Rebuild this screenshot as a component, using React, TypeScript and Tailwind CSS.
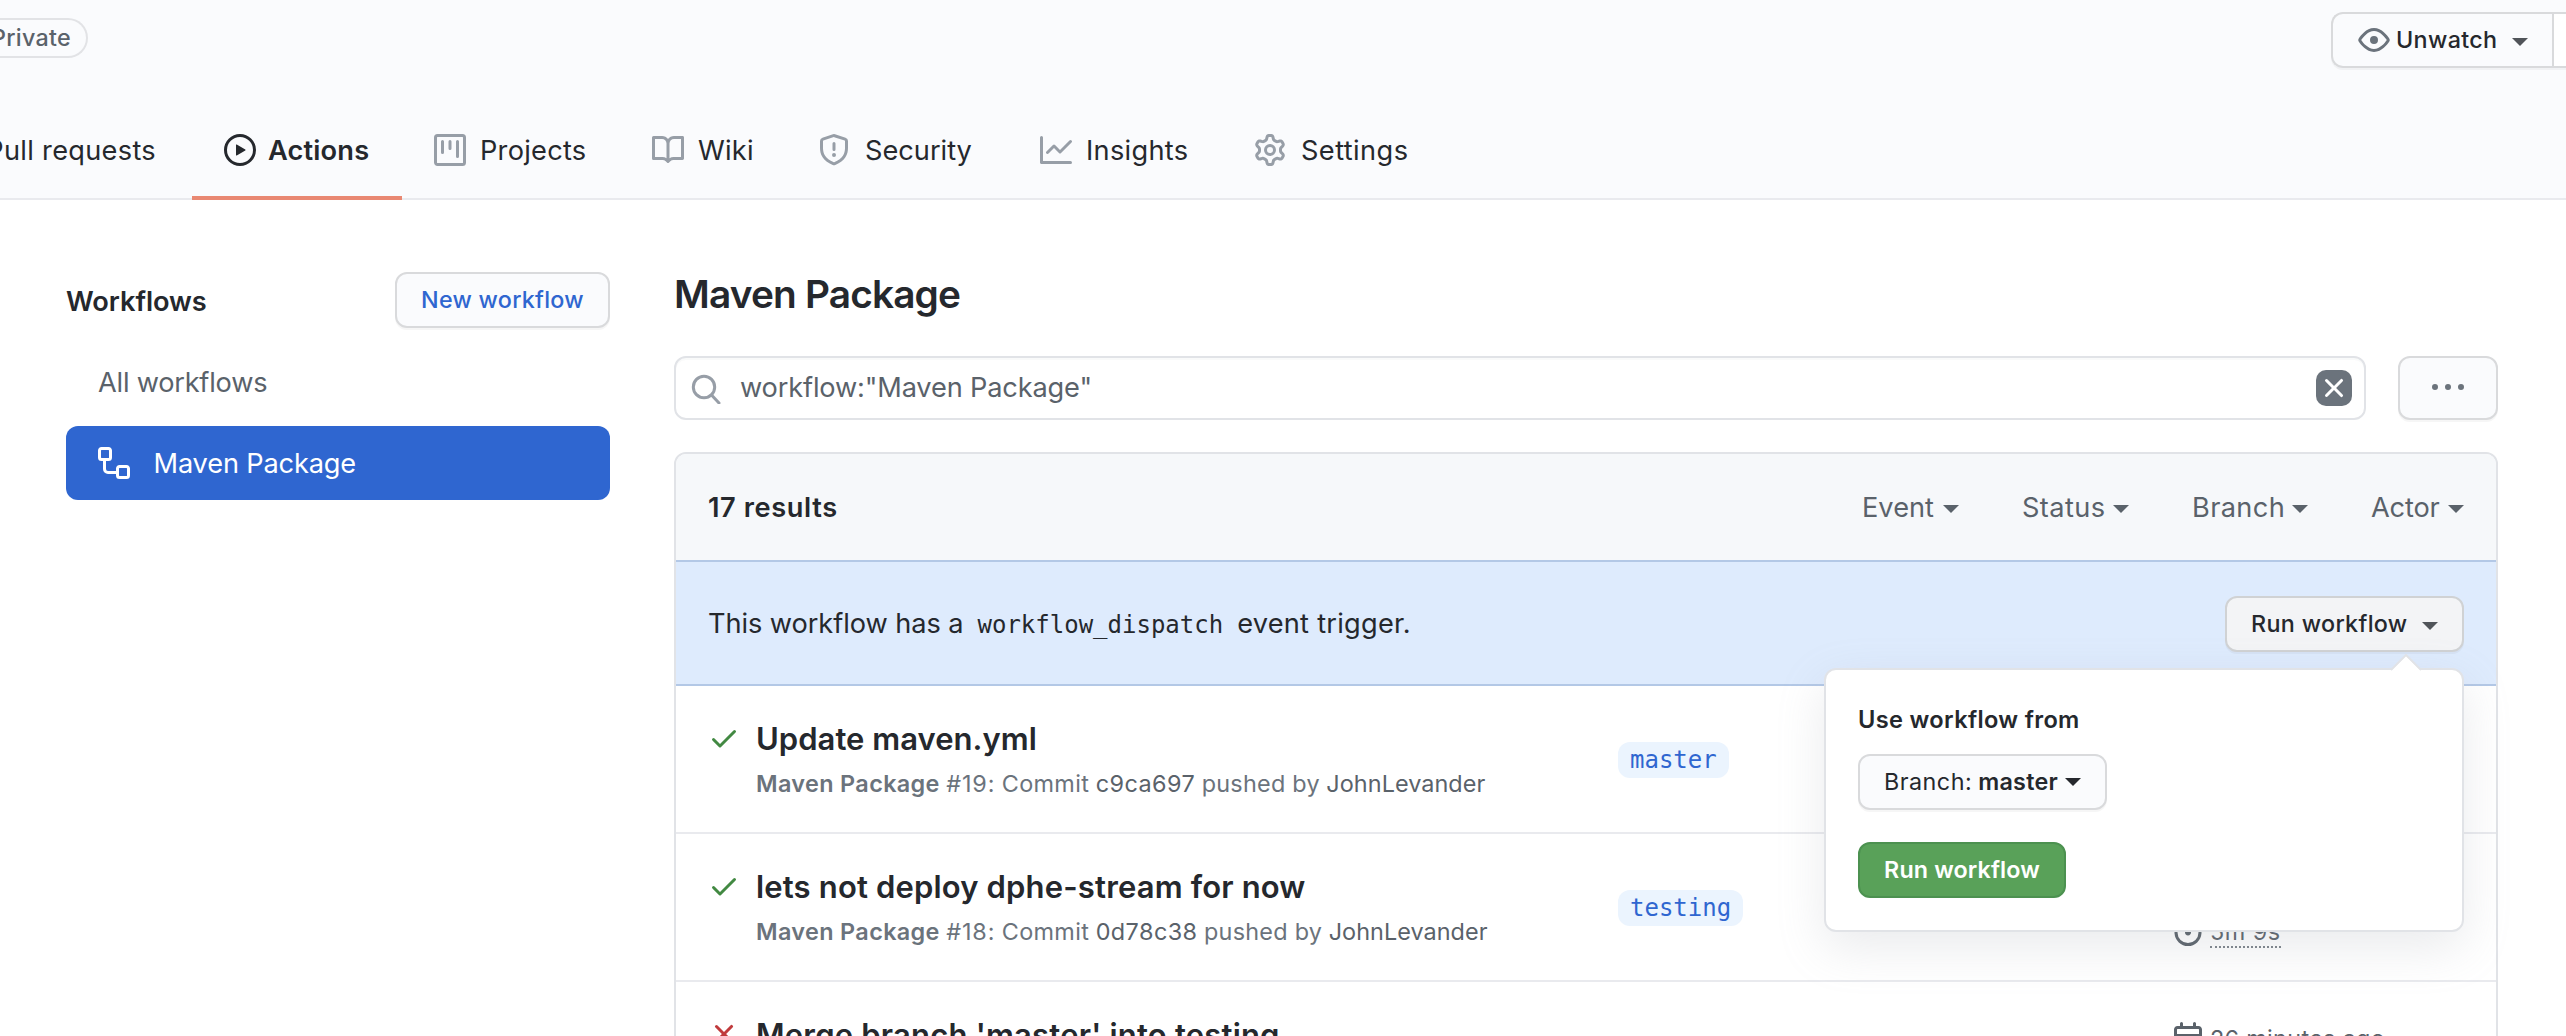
import React from "react";

const paths = {
  play: "M1.5 8a6.5 6.5 0 1113 0 6.5 6.5 0 01-13 0zM8 0a8 8 0 100 16A8 8 0 008 0zM6.379 5.227A.25.25 0 006 5.442v5.117a.25.25 0 00.379.214l4.264-2.559a.25.25 0 000-.428L6.379 5.227z",
  project:
    "M1.75 0A1.75 1.75 0 000 1.75v12.5C0 15.216.784 16 1.75 16h12.5A1.75 1.75 0 0016 14.25V1.75A1.75 1.75 0 0014.25 0H1.75zM1.5 1.75a.25.25 0 01.25-.25h12.5a.25.25 0 01.25.25v12.5a.25.25 0 01-.25.25H1.75a.25.25 0 01-.25-.25V1.75zM11.75 3a.75.75 0 00-.75.75v7.5a.75.75 0 001.5 0v-7.5a.75.75 0 00-.75-.75zm-8.25.75a.75.75 0 011.5 0v5.5a.75.75 0 01-1.5 0v-5.5zM8 3a.75.75 0 00-.75.75v3.5a.75.75 0 001.5 0v-3.5A.75.75 0 008 3z",
  book: "M0 1.75A.75.75 0 01.75 1h4.253c1.227 0 2.317.59 3 1.501A3.744 3.744 0 0111.006 1h4.245a.75.75 0 01.75.75v10.5a.75.75 0 01-.75.75h-4.507a2.25 2.25 0 00-1.591.659l-.622.621a.75.75 0 01-1.06 0l-.622-.621A2.25 2.25 0 005.258 13H.75a.75.75 0 01-.75-.75V1.75zm8.755 3a2.25 2.25 0 012.25-2.25H14.5v9h-3.757c-.71 0-1.4.201-1.992.572l.004-7.322zm-1.504 7.324l.004-5.073-.002-2.253A2.25 2.25 0 005.003 2.5H1.5v9h3.757a3.75 3.75 0 011.994.574z",
  shield:
    "M7.467.133a1.75 1.75 0 011.066 0l5.25 1.68A1.75 1.75 0 0115 3.48V7c0 1.566-.32 3.182-1.303 4.682-.983 1.498-2.585 2.813-5.032 3.855a1.7 1.7 0 01-1.33 0c-2.447-1.042-4.049-2.357-5.032-3.855C1.32 10.182 1 8.566 1 7V3.48a1.75 1.75 0 011.217-1.667l5.25-1.68zm.61 1.429a.25.25 0 00-.153 0l-5.25 1.68a.25.25 0 00-.174.238V7c0 1.358.275 2.666 1.057 3.86.784 1.194 2.121 2.34 4.366 3.297a.2.2 0 00.154 0c2.245-.956 3.582-2.104 4.366-3.298C13.225 9.666 13.5 8.36 13.5 7V3.48a.25.25 0 00-.174-.237l-5.25-1.68zM9 10.5a1 1 0 11-2 0 1 1 0 012 0zm-.25-5.75a.75.75 0 10-1.5 0v3a.75.75 0 001.5 0v-3z",
  graph:
    "M1.5 1.75a.75.75 0 00-1.5 0v12.5c0 .414.336.75.75.75h14.5a.75.75 0 000-1.5H1.5V1.75zm14.28 2.53a.75.75 0 00-1.06-1.06L10 7.94 7.53 5.47a.75.75 0 00-1.06 0L3.22 8.72a.75.75 0 001.06 1.06L7 7.06l2.47 2.47a.75.75 0 001.06 0l5.25-5.25z",
  gear: "M7.429 1.525a6.593 6.593 0 011.142 0c.036.003.108.036.137.146l.289 1.105c.147.56.55.967.997 1.189.174.086.341.183.501.29.417.278.97.423 1.53.27l1.102-.303c.11-.03.175.016.195.046.219.31.41.641.573.989.014.031.022.11-.059.19l-.815.806c-.411.406-.562.957-.53 1.456a4.588 4.588 0 010 .582c-.032.499.119 1.05.53 1.456l.815.806c.08.08.073.159.059.19a6.494 6.494 0 01-.573.99c-.02.029-.086.074-.195.045l-1.103-.303c-.559-.153-1.112-.008-1.529.27-.16.107-.327.204-.5.29-.449.222-.851.628-.998 1.189l-.289 1.105c-.029.11-.101.143-.137.146a6.613 6.613 0 01-1.142 0c-.036-.003-.108-.037-.137-.146l-.289-1.105c-.147-.56-.55-.967-.997-1.189a4.502 4.502 0 01-.501-.29c-.417-.278-.97-.423-1.53-.27l-1.102.303c-.11.03-.175-.016-.195-.046a6.492 6.492 0 01-.573-.989c-.014-.031-.022-.11.059-.19l.815-.806c.411-.406.562-.957.53-1.456a4.587 4.587 0 010-.582c.032-.499-.119-1.05-.53-1.456l-.815-.806c-.08-.08-.073-.159-.059-.19a6.44 6.44 0 01.573-.99c.02-.029.086-.075.195-.045l1.103.303c.559.153 1.112.008 1.529-.27.16-.107.327-.204.5-.29.449-.222.851-.628.998-1.189l.289-1.105c.029-.11.101-.143.137-.146zM8 0c-.236 0-.47.01-.701.03-.743.065-1.29.615-1.458 1.261l-.29 1.106c-.017.066-.078.158-.211.224a5.994 5.994 0 00-.668.386c-.123.082-.233.09-.3.071L3.27 2.776c-.644-.177-1.392.02-1.82.63a7.977 7.977 0 00-.704 1.217c-.315.675-.111 1.422.363 1.891l.815.806c.05.048.098.147.088.294a6.084 6.084 0 000 .772c.01.147-.038.246-.088.294l-.815.806c-.474.469-.678 1.216-.363 1.891.2.428.436.835.704 1.218.428.609 1.176.806 1.82.63l1.103-.303c.066-.019.176-.011.299.071.213.143.436.272.668.386.133.066.194.158.212.224l.289 1.106c.169.646.715 1.196 1.458 1.26a8.094 8.094 0 001.402 0c.743-.064 1.29-.614 1.458-1.26l.29-1.106c.017-.066.078-.158.211-.224a5.98 5.98 0 00.668-.386c.123-.082.233-.09.3-.071l1.102.302c.644.177 1.392-.02 1.82-.63.268-.382.505-.789.704-1.217.315-.675.111-1.422-.364-1.891l-.814-.806c-.05-.048-.098-.147-.088-.294a6.1 6.1 0 000-.772c-.01-.147.039-.246.088-.294l.814-.806c.475-.469.679-1.216.364-1.891a7.992 7.992 0 00-.704-1.218c-.428-.609-1.176-.806-1.82-.63l-1.103.303c-.066.019-.176.011-.299-.071a5.991 5.991 0 00-.668-.386c-.133-.066-.194-.158-.212-.224L10.16 1.29C9.99.645 9.444.095 8.701.031A8.094 8.094 0 008 0zm1.5 8a1.5 1.5 0 11-3 0 1.5 1.5 0 013 0zM11 8a3 3 0 11-6 0 3 3 0 016 0z",
  eye: "M1.679 7.932c.412-.621 1.242-1.75 2.366-2.717C5.175 4.242 6.527 3.5 8 3.5c1.473 0 2.824.742 3.955 1.715 1.124.967 1.954 2.096 2.366 2.717a.119.119 0 010 .136c-.412.621-1.242 1.75-2.366 2.717C10.825 11.758 9.473 12.5 8 12.5c-1.473 0-2.824-.742-3.955-1.715C2.92 9.818 2.09 8.69 1.679 8.068a.119.119 0 010-.136zM8 2c-1.981 0-3.67.992-4.933 2.078C1.797 5.169.88 6.423.43 7.1a1.619 1.619 0 000 1.798c.45.678 1.367 1.932 2.637 3.024C4.329 13.008 6.019 14 8 14c1.981 0 3.67-.992 4.933-2.078 1.27-1.091 2.187-2.345 2.637-3.023a1.619 1.619 0 000-1.798c-.45-.678-1.367-1.932-2.637-3.023C11.671 2.992 9.981 2 8 2zm0 8a2 2 0 100-4 2 2 0 000 4z",
  workflow:
    "M0 1.75C0 .784.784 0 1.75 0h3.5C6.216 0 7 .784 7 1.75v3.5A1.75 1.75 0 015.25 7H4v4a1 1 0 001 1h4v-1.25C9 9.784 9.784 9 10.75 9h3.5c.966 0 1.75.784 1.75 1.75v3.5A1.75 1.75 0 0114.25 16h-3.5A1.75 1.75 0 019 14.25v-.75H5A2.5 2.5 0 012.5 11V7h-.75A1.75 1.75 0 010 5.25v-3.5zm1.75-.25a.25.25 0 00-.25.25v3.5c0 .138.112.25.25.25h3.5a.25.25 0 00.25-.25v-3.5a.25.25 0 00-.25-.25h-3.5zm9 9a.25.25 0 00-.25.25v3.5c0 .138.112.25.25.25h3.5a.25.25 0 00.25-.25v-3.5a.25.25 0 00-.25-.25h-3.5z",
  check:
    "M13.78 4.22a.75.75 0 010 1.06l-7.25 7.25a.75.75 0 01-1.06 0L2.22 9.28a.75.75 0 011.06-1.06L6 10.94l6.72-6.72a.75.75 0 011.06 0z",
  x: "M3.72 3.72a.75.75 0 011.06 0L8 6.94l3.22-3.22a.75.75 0 111.06 1.06L9.06 8l3.22 3.22a.75.75 0 11-1.06 1.06L8 9.06l-3.22 3.22a.75.75 0 01-1.06-1.06L6.94 8 3.72 4.78a.75.75 0 010-1.06z",
  kebab:
    "M8 9a1.5 1.5 0 100-3 1.5 1.5 0 000 3zM1.5 9a1.5 1.5 0 100-3 1.5 1.5 0 000 3zm13 0a1.5 1.5 0 100-3 1.5 1.5 0 000 3z",
  calendar:
    "M4.75 0a.75.75 0 01.75.75V2h5V.75a.75.75 0 011.5 0V2h1.25c.966 0 1.75.784 1.75 1.75v10.5A1.75 1.75 0 0113.25 16H2.75A1.75 1.75 0 011 14.25V3.75C1 2.784 1.784 2 2.75 2H4V.75A.75.75 0 014.75 0zm0 3.5h-2a.25.25 0 00-.25.25V6h11V3.75a.25.25 0 00-.25-.25h-8.5zm-2.25 4v6.75c0 .138.112.25.25.25h10.5a.25.25 0 00.25-.25V7.5h-11z",
  stopwatch:
    "M5.75.75A.75.75 0 016.5 0h3a.75.75 0 010 1.5h-.75v1l-.001.041a6.718 6.718 0 013.464 1.435l.007-.006.75-.75a.75.75 0 111.06 1.06l-.75.75-.006.007a6.75 6.75 0 11-10.548 0L2.72 5.03l-.75-.75a.75.75 0 011.06-1.06l.75.75.007.006A6.718 6.718 0 017.25 2.541a.756.756 0 010-.041v-1H6.5a.75.75 0 01-.75-.75zM8 14.5A5.25 5.25 0 108 4a5.25 5.25 0 000 10.5zm.389-6.7l1.33-1.33a.75.75 0 111.061 1.06L9.45 8.861A1.502 1.502 0 018 10.75a1.5 1.5 0 11.389-2.95z",
};

type IconName = keyof typeof paths;

function Icon({ name, className = "" }: { name: IconName; className?: string }) {
  return (
    <svg viewBox="0 0 16 16" className={`size-8 shrink-0 ${className}`} fill="currentColor" fillRule="evenodd">
      <path d={paths[name]} />
    </svg>
  );
}

function Caret({ className = "" }: { className?: string }) {
  return (
    <svg viewBox="0 0 16 8" className={`h-2 w-4 shrink-0 ${className}`} fill="currentColor">
      <path d="M0 0h16L8 8z" />
    </svg>
  );
}

const tabs: { icon: IconName; label: string; box: string; text: string; active?: boolean }[] = [
  { icon: "play", label: "Actions", box: "w-[210px]", text: "ml-3 tracking-[0.17px]", active: true },
  { icon: "project", label: "Projects", box: "w-[218px]", text: "ml-3.5 tracking-[0.25px]" },
  { icon: "book", label: "Wiki", box: "w-[166px]", text: "ml-3.5 tracking-[0.25px]" },
  { icon: "shield", label: "Security", box: "w-[222px]", text: "ml-[15px] tracking-[0px]" },
  { icon: "graph", label: "Insights", box: "w-[214px]", text: "ml-3.5 tracking-[0.3px]" },
  { icon: "gear", label: "Settings", box: "w-[218px]", text: "ml-[15px] tracking-[0.42px]" },
];

const filters = [
  { label: "Event", box: "w-[97px]", text: "tracking-[0.02px]" },
  { label: "Status", box: "w-[107px]", text: "tracking-[0.4px]" },
  { label: "Branch", box: "w-[116px]", text: "tracking-[0.35px]" },
  { label: "Actor", box: "w-[93px]", text: "tracking-[-0.16px]" },
];

type Run = {
  ok: boolean;
  title: string;
  track: string;
  number: number;
  commit: string;
  branch?: string;
  when?: string;
  duration?: string;
};

const runs: Run[] = [
  { ok: true, title: "Update maven.yml", track: "tracking-[0.03px]", number: 19, commit: "c9ca697", branch: "master" },
  {
    ok: true,
    title: "lets not deploy dphe-stream for now",
    track: "tracking-[0.16px]",
    number: 18,
    commit: "0d78c38",
    branch: "testing",
    duration: "5m 9s",
  },
  {
    ok: false,
    title: "Merge branch 'master' into testing",
    track: "tracking-[0.2px]",
    number: 17,
    commit: "",
    when: "26 minutes ago",
  },
];

function Header() {
  return (
    <header className="flex h-[200px] shrink-0 flex-col justify-between bg-[#fafbfd] shadow-[inset_0_-2px_0_#e9eaee]">
      <div className="flex items-start justify-between">
        <div className="mt-[18px] flex h-10 w-[88px] items-center justify-end rounded-r-[20px] border-2 border-l-0 border-[#e2e3e6] pr-[15px] text-[23.3px] font-medium tracking-[0.3px] text-[#5a626a]">
          Private
        </div>
        <div className="mt-3 flex h-14 w-[235px] rounded-l-xl border-2 border-r-0 border-[#d9dadc] shadow-[0_2px_0_rgba(27,31,35,0.04)]">
          <div className="flex w-[219px] items-center pl-[25px]">
            <Icon name="eye" className="text-[#6b737c]" />
            <span className="ml-1.5 text-[23.3px] font-medium tracking-[0.36px]">Unwatch</span>
            <Caret className="mt-1 ml-[15px] text-[#505459]" />
          </div>
          <div className="grow border-l-2 border-[#d9dadc] bg-white" />
        </div>
      </div>
      <nav className="flex h-[100px] text-[27.2px]">
        <div className="flex w-48 items-center justify-end pt-0.5 pr-9 whitespace-nowrap tracking-[0.3px]">
          Pull requests
        </div>
        {tabs.map((t) => (
          <div
            key={t.label}
            className={`flex items-center border-y-4 border-t-transparent pl-8 ${t.box} ${
              t.active ? "border-b-[#e98872] font-semibold" : "border-b-transparent"
            }`}
          >
            <Icon name={t.icon} className={t.active ? "" : "text-[#979ea7]"} />
            <span className={`pt-0.5 ${t.text}`}>{t.label}</span>
          </div>
        ))}
      </nav>
    </header>
  );
}

function Sidebar() {
  return (
    <aside className="flex w-[544px] flex-col">
      <div className="flex h-14 items-center justify-between">
        <h2 className="pt-1 text-[27.2px] font-semibold tracking-[-0.05px]">Workflows</h2>
        <button className="flex h-14 w-[215px] items-center justify-center rounded-xl border-2 border-[#d9dadc] bg-[#fafbfd] text-[23.3px] font-medium tracking-[0.27px] text-[#2f66d0] shadow-[0_2px_0_rgba(27,31,35,0.04)]">
          New workflow
        </button>
      </div>
      <div className="mt-[17px] flex h-[74px] items-center pt-0.5 pl-8 text-[27.2px] tracking-[-0.23px] text-[#5a626a]">
        All workflows
      </div>
      <div className="mt-[7px] flex h-[74px] items-center rounded-xl bg-[#2f66d0] pl-8 text-[27.2px] tracking-[-0.16px] text-white">
        <Icon name="workflow" />
        <span className="ml-[23.5px] pt-[3px]">Maven Package</span>
      </div>
    </aside>
  );
}

function RunPopover() {
  return (
    <div className="absolute top-[72px] right-0 z-10 flex h-[264px] w-[640px] flex-col items-start rounded-xl border-2 border-[#e1e3e7] bg-white pt-8 pl-8 shadow-[0_16px_48px_rgba(149,157,165,0.2)]">
      <svg viewBox="0 0 32 17" className="absolute -top-4 right-10 h-[17px] w-8">
        <path d="M1 16L16 1l15 15" fill="#fff" stroke="#e1e3e7" strokeWidth="2" />
        <path d="M2 17L16 3l14 14z" fill="#fff" />
      </svg>
      <h3 className="text-[23.6px] leading-9 font-semibold tracking-[0.34px]">Use workflow from</h3>
      <button className="mt-4 flex h-14 w-[249px] items-center rounded-xl border-2 border-[#d9dadc] bg-[#fafbfd] pl-6 text-[23.3px] shadow-[0_2px_0_rgba(27,31,35,0.04)]">
        <span className="tracking-[0.5px]">Branch:</span>
        <span className="ml-1.5 font-semibold tracking-[0.3px]">master</span>
        <Caret className="ml-[7px]" />
      </button>
      <button className="mt-8 flex h-14 w-[208px] items-center justify-center rounded-xl border-2 border-[#4c9150] bg-[#59a159] text-[23.3px] font-semibold tracking-[0.12px] text-white">
        Run workflow
      </button>
    </div>
  );
}

function RunRow({ run }: { run: Run }) {
  return (
    <div className="flex h-[148px] shrink-0 items-start border-b-2 border-[#e9eaee] pl-8">
      <Icon name={run.ok ? "check" : "x"} className={run.ok ? "mt-9 text-[#428942]" : "mt-9 text-[#c03a3c]"} />
      <div className="mt-8 ml-4 w-[862px] whitespace-nowrap">
        <div className={`text-[31px] leading-[41px] font-semibold ${run.track}`}>{run.title}</div>
        <div className="mt-[7px] flex gap-[6.5px] text-[23.4px] leading-9 text-[#6b737c]">
          <span className="font-semibold tracking-[0.36px]">Maven Package</span>
          <span className="tracking-[0.85px]">#{run.number}:</span>
          <span className="tracking-[0.33px]">Commit</span>
          <span className="tracking-[0.45px] text-[#5a626a]">{run.commit}</span>
          <span className="tracking-[0.25px]">pushed by</span>
          <span className="tracking-[0.06px] text-[#5a626a]">JohnLevander</span>
        </div>
      </div>
      <div className="w-[554px] pt-14">
        {run.branch && (
          <span className="flex h-9 w-fit items-center rounded-xl bg-[#ebf4fe] px-3 font-['DejaVu_Sans_Mono',monospace] text-[24px] text-[#2f66d0]">
            {run.branch}
          </span>
        )}
      </div>
      <div className="flex flex-col gap-2 pt-10 text-[23.4px] text-[#5a626a]">
        <div className="flex h-8 items-center">
          {run.when && (
            <>
              <Icon name="calendar" />
              <span className="ml-1.5 pt-0.5 tracking-[0.32px]">{run.when}</span>
            </>
          )}
        </div>
        {run.duration && (
          <div className="flex h-[34px] items-start">
            <Icon name="stopwatch" />
            <span className="ml-1.5 h-[34px] border-b-2 border-dotted border-[#7d848c] leading-[35px] tracking-[0.5px]">
              {run.duration}
            </span>
          </div>
        )}
      </div>
    </div>
  );
}

export default function App() {
  return (
    <div className="flex h-[1036px] w-[2566px] flex-col overflow-hidden bg-white font-['Inter',sans-serif] text-[#25282d]">
      <Header />
      <div className="flex shrink-0 gap-16 px-[66px] pt-[72px]">
        <Sidebar />
        <main className="flex w-[1824px] shrink-0 flex-col">
          <h1 className="mb-10 text-[38.8px] leading-[44px] font-semibold tracking-[-0.84px]">Maven Package</h1>
          <div className="flex h-16 gap-8">
            <div className="flex w-[1692px] items-center rounded-xl border-2 border-[#e1e3e7] pr-3 pl-3.5 shadow-[inset_0_2px_0_rgba(225,228,232,0.2)]">
              <svg viewBox="0 0 32 32" className="size-8 shrink-0" fill="none" stroke="#979ea7" strokeWidth="3">
                <circle cx="14" cy="15" r="10.7" />
                <path d="M21.5 23l7.5 8" strokeLinecap="round" />
              </svg>
              <span className="ml-[18px] grow pt-px text-[27.2px] tracking-[-0.16px] text-[#5a626a]">
                workflow:"Maven Package"
              </span>
              <span className="flex size-9 items-center justify-center rounded-[10px] bg-[#6b737c] text-white">
                <Icon name="x" />
              </span>
            </div>
            <button className="flex w-[100px] items-center justify-center rounded-xl border-2 border-[#d9dadc] bg-[#fafbfd] text-[#6b737c] shadow-[0_2px_0_rgba(27,31,35,0.04)]">
              <Icon name="kebab" />
            </button>
          </div>
          <div className="mt-8 flex h-[700px] flex-col rounded-t-xl border-2 border-[#e1e3e7]">
            <div className="flex h-[106px] shrink-0 items-center justify-between rounded-t-[10px] bg-[#f6f8fa] px-8 pt-[3px] text-[27.2px]">
              <span className="font-semibold tracking-[0.6px]">17 results</span>
              <div className="flex gap-[63px] text-[#5a626a]">
                {filters.map((f) => (
                  <span key={f.label} className={`flex items-center justify-between ${f.box}`}>
                    <span className={f.text}>{f.label}</span>
                    <Caret className="mt-0.5" />
                  </span>
                ))}
              </div>
            </div>
            <div className="flex h-[126px] shrink-0 items-center justify-between border-y-2 border-[#b3c8e6] bg-[#deebfd] px-8 pt-0.5">
              <p className="pt-px text-[27.2px]">
                <span className="tracking-[-0.07px]">This workflow has a</span>
                <code className="mr-3.5 ml-3.5 font-['DejaVu_Sans_Mono',monospace] text-[24px]">
                  workflow_dispatch
                </code>
                <span className="tracking-[0.25px]">event trigger.</span>
              </p>
              <div className="relative">
                <button className="flex h-14 w-[239px] items-center rounded-xl border-2 border-[#d0d2d4] bg-[#f3f4f6] pl-6 shadow-[0_2px_0_rgba(27,31,35,0.04)]">
                  <span className="text-[23.3px] font-medium tracking-[0.34px]">Run workflow</span>
                  <Caret className="mt-1 ml-3.5 text-[#505459]" />
                </button>
                <RunPopover />
              </div>
            </div>
            {runs.map((r) => (
              <RunRow key={r.number} run={r} />
            ))}
          </div>
        </main>
      </div>
    </div>
  );
}
